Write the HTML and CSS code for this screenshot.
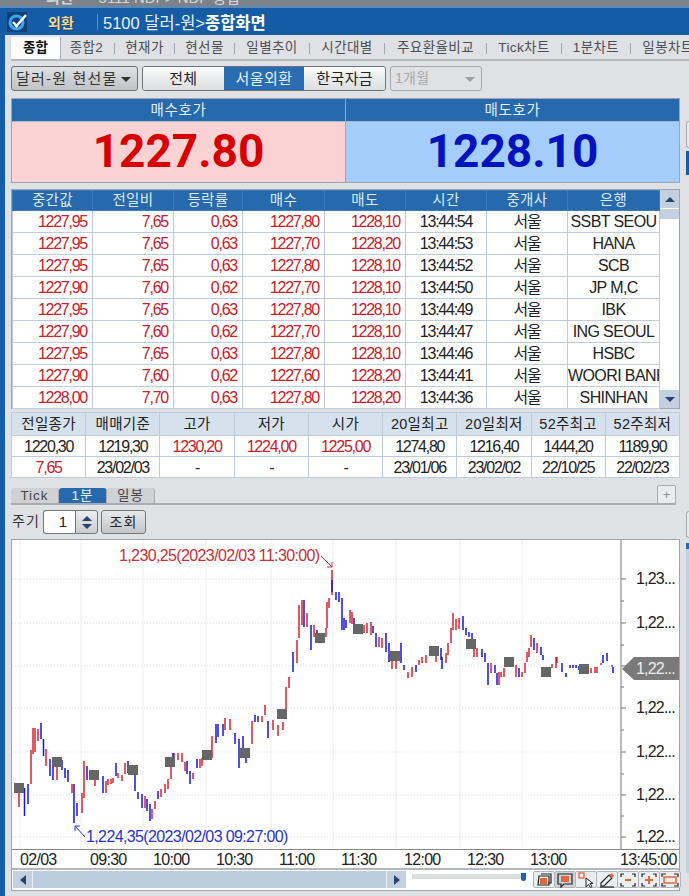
FILE: index.html
```html
<!DOCTYPE html>
<html lang="ko">
<head>
    <meta charset="UTF-8">
    <title>5100 달러-원 종합화면</title>
    <link rel="stylesheet" href="styles.css">
</head>
<body>
    <!-- window lying behind this one, only its bottom edge shows -->
    <div class="behind"><span class="behind-a">외환</span><span class="behind-b">5111 NDF&gt; NDF 종합</span></div>

    <div class="titlebar">
        <svg class="logo" width="20" height="20" viewBox="0 0 20 20">
            <rect width="20" height="20" fill="#123f78"/>
            <circle cx="9.5" cy="10.5" r="6.5" fill="none" stroke="#39a6ee" stroke-width="3"/>
            <path d="M6 10l3.5 4L19 3" fill="none" stroke="#fff" stroke-width="2.6"/>
        </svg>
        <span class="title-tag">외환</span>
        <span class="title-sep"></span>
        <span class="title-text">5100 달러-원&gt;<b>종합화면</b></span>
    </div>

    <div class="body-row">
        <div class="main">
            <div class="tabs">
                <span class="tab tab-on">종합</span>
                <span class="tab tab-a">종합2</span><i></i>
                <span class="tab tab-b">현재가</span><i></i>
                <span class="tab tab-b">현선물</span><i></i>
                <span class="tab tab-c">일별추이</span><i></i>
                <span class="tab tab-c">시간대별</span><i></i>
                <span class="tab tab-d">주요환율비교</span><i></i>
                <span class="tab tab-c">Tick차트</span><i></i>
                <span class="tab tab-e">1분차트</span><i></i>
                <span class="tab tab-c">일봉차트</span>
            </div>

            <div class="toolbar">
                <div class="select select-main">달러-원 현선물<span class="caret"></span></div>
                <div class="seg">
                    <span class="seg-btn">전체</span>
                    <span class="seg-btn seg-on">서울외환</span>
                    <span class="seg-btn">한국자금</span>
                </div>
                <div class="select select-off">1개월<span class="caret"></span></div>
            </div>

            <div class="quotes">
                <div class="quote">
                    <div class="quote-head">매수호가</div>
                    <div class="quote-val val-buy">1227.80</div>
                </div>
                <div class="quote quote-right">
                    <div class="quote-head">매도호가</div>
                    <div class="quote-val val-sell">1228.10</div>
                </div>
            </div>

            <div class="ticks">
                <table class="grid tick-table">
                    <colgroup>
                        <col class="w80"><col class="w81"><col class="w69"><col class="w82">
                        <col class="w81"><col class="w81"><col class="w81"><col class="w92">
                    </colgroup>
                    <thead>
                        <tr><th>중간값</th><th>전일비</th><th>등락률</th><th>매수</th><th>매도</th><th>시간</th><th>중개사</th><th>은행</th></tr>
                    </thead>
                    <tbody>
                        <tr><td>1227,95</td><td>7,65</td><td>0,63</td><td>1227,80</td><td>1228,10</td><td>13:44:54</td><td>서울</td><td>SSBT SEOU</td></tr>
                        <tr><td>1227,95</td><td>7,65</td><td>0,63</td><td>1227,70</td><td>1228,20</td><td>13:44:53</td><td>서울</td><td>HANA</td></tr>
                        <tr><td>1227,95</td><td>7,65</td><td>0,63</td><td>1227,80</td><td>1228,10</td><td>13:44:52</td><td>서울</td><td>SCB</td></tr>
                        <tr><td>1227,90</td><td>7,60</td><td>0,62</td><td>1227,70</td><td>1228,10</td><td>13:44:50</td><td>서울</td><td>JP M,C</td></tr>
                        <tr><td>1227,95</td><td>7,65</td><td>0,63</td><td>1227,80</td><td>1228,10</td><td>13:44:49</td><td>서울</td><td>IBK</td></tr>
                        <tr><td>1227,90</td><td>7,60</td><td>0,62</td><td>1227,70</td><td>1228,10</td><td>13:44:47</td><td>서울</td><td>ING SEOUL</td></tr>
                        <tr><td>1227,95</td><td>7,65</td><td>0,63</td><td>1227,80</td><td>1228,10</td><td>13:44:46</td><td>서울</td><td>HSBC</td></tr>
                        <tr><td>1227,90</td><td>7,60</td><td>0,62</td><td>1227,60</td><td>1228,20</td><td>13:44:41</td><td>서울</td><td>WOORI BANK</td></tr>
                        <tr><td>1228,00</td><td>7,70</td><td>0,63</td><td>1227,80</td><td>1228,20</td><td>13:44:36</td><td>서울</td><td>SHINHAN</td></tr>
                    </tbody>
                </table>
                <div class="vscroll">
                    <span class="vs-btn"><span class="arrow-up"></span></span>
                    <span class="vs-thumb"></span>
                    <span class="vs-track"></span>
                    <span class="vs-btn vs-down"><span class="arrow-down"></span></span>
                </div>
            </div>

            <table class="grid summary">
                <thead>
                    <tr><th>전일종가</th><th>매매기준</th><th>고가</th><th>저가</th><th>시가</th><th>20일최고</th><th>20일최저</th><th>52주최고</th><th>52주최저</th></tr>
                </thead>
                <tbody>
                    <tr><td>1220,30</td><td>1219,30</td><td class="red">1230,20</td><td class="red">1224,00</td><td class="red">1225,00</td><td>1274,80</td><td>1216,40</td><td>1444,20</td><td>1189,90</td></tr>
                    <tr><td class="red">7,65</td><td>23/02/03</td><td>-</td><td>-</td><td>-</td><td>23/01/06</td><td>23/02/02</td><td>22/10/25</td><td>22/02/23</td></tr>
                </tbody>
            </table>

            <div class="chart-tabs">
                <span class="ctab">Tick</span>
                <span class="ctab ctab-on">1분</span>
                <span class="ctab">일봉</span>
                <span class="plus">+</span>
            </div>

            <div class="period">
                <span class="period-label">주기</span>
                <span class="spin-input">1</span>
                <span class="spin"><span class="arrow-up"></span><span class="arrow-down"></span></span>
                <span class="query">조회</span>
            </div>

            <div class="chart">
                <svg class="chart-svg" width="667" height="309" viewBox="12 540 667 309">
                    <!-- grid -->
                    <path class="grid-v" d="M20 540V849M81 540V849M143 540V849M206 540V849M271 540V849M333 540V849M396 540V849M460 540V849M522 540V849"/>
                    <path class="grid-h" d="M12 579H621M12 623H621M12 666H621M12 708H621M12 752H621M12 795H621M12 837H621"/>

                    <!-- up bars -->
                    <path class="bar-up" d="M19 793V807M31 750V784M33 728V754M35 728V752M38 729V741M46 749V766M57 766V780M72 784V793M82 793V813M84 761V798M95 779V786M106 781V793M108 779V785M111 779V784M113 778V783M118 773V778M122 775V781M125 763V774M145 796V808M152 809V819M155 801V809M161 789V797M165 784V793M168 779V789M171 766V779M174 753V761M178 753V760M182 753V762M185 762V771M193 773V779M200 759V768M202 758V766M212 736V758M225 718V730M230 719V730M252 721V744M262 716V722M265 705V715M273 720V730M278 725V736M283 722V730M286 687V718M289 677V688M297 640V663M299 605V638M302 600V625M307 613V627M314 625V637M326 628V637M327 602V628M329 598V608M332 570V595M350 610V623M352 612V624M364 625V633M367 623V633M371 622V635M379 637V647M382 638V648M392 653V669M396 660V669M408 672V678M412 667V677M419 660V665M422 657V663M426 655V663M436 655V662M446 653V663M448 643V655M451 628V643M453 613V630M456 619V630M459 618V629M474 648V657M477 648V657M491 663V673M499 672V685M501 672V677M504 668V677M516 665V677M522 672V677M525 663V673M527 652V662M529 648V657M531 635V647M537 643V653M552 664V668M556 657V668M557 657V663M591 668V673M595 667V673M597 667V673M601 663V665M612 665V667"/>
                    <!-- down bars -->
                    <path class="bar-down" d="M24.5 788V816M28 784V804M41 723V739M43.5 739V756M50 759V776M53 766V780M62 760V770M65 768V778M68 770V782M74 784V823M77 803V816M87 766V780M90 770V780M103 776V793M116 763V776M128 761V773M135 773V791M138 792V799M142 794V808M147 799V811M150 804V821M158 791V799M173 753V760M187 761V774M190 771V784M197 759V768M216 724V743M218 724V737M223 724V736M235 733V744M239 739V768M243 736V749M246 758V763M255 715V722M258 716V722M268 721V738M293 652V672M304 600V627M311 625V650M317 630V636M332 580V592M336 592V600M339 592V602M342 598V630M344 618V630M346 620V628M354 618V625M373 626V633M376 633V647M386 633V652M389 643V662M401 643V663M404 665V670M416 665V672M441 648V660M442 657V669M463 616V630M466 628V635M469 632V637M472 633V640M482 649V657M485 653V662M488 663V685M495 665V673M497 673V685M519 668V677M534 638V650M541 647V655M543 655V660M562 663V672M566 673V677M570 665V668M573 665V668M576 665V668M579 666V670M603 655V663M607 653V661M613 667V673"/>

                    <!-- 30 min markers -->
                    <g class="marks">
                        <rect x="14" y="783" width="10" height="10"/><rect x="52" y="757" width="10" height="10"/>
                        <rect x="89" y="770" width="10" height="10"/><rect x="128" y="765" width="10" height="10"/>
                        <rect x="165" y="757" width="10" height="10"/><rect x="202" y="750" width="10" height="10"/>
                        <rect x="240" y="748" width="10" height="10"/><rect x="277" y="709" width="10" height="10"/>
                        <rect x="315" y="633" width="10" height="10"/><rect x="353" y="624" width="10" height="10"/>
                        <rect x="390" y="651" width="10" height="10"/><rect x="429" y="646" width="10" height="10"/>
                        <rect x="466" y="639" width="10" height="10"/><rect x="504" y="657" width="10" height="10"/>
                        <rect x="541" y="667" width="10" height="10"/><rect x="579" y="664" width="10" height="10"/>
                    </g>

                    <!-- high / low notes -->
                    <text class="note note-hi" x="119" y="561">1,230,25(2023/02/03 11:30:00)</text>
                    <path class="arrow-hi" d="M321 556L332 567M332 562V567H327"/>
                    <text class="note note-lo" x="86" y="842">1,224,35(2023/02/03 09:27:00)</text>
                    <path class="arrow-lo" d="M85 837L75 826M75 831V826H80"/>

                    <!-- price axis -->
                    <path class="axis" d="M621 540V849M621 579H626M621 601H624M621 623H626M621 645H624M621 666H626M621 687H624M621 708H626M621 730H624M621 752H626M621 774H624M621 795H626M621 816H624M621 837H626"/>
                    <g class="ylabels">
                        <text x="636" y="584">1,23...</text>
                        <text x="636" y="628">1,22...</text>
                        <text x="636" y="713">1,22...</text>
                        <text x="636" y="757">1,22...</text>
                        <text x="636" y="800">1,22...</text>
                        <text x="636" y="842">1,22...</text>
                    </g>
                    <path class="price-tag" d="M622 669L634 657H679V680H634Z"/>
                    <text class="tag-text" x="636" y="674">1,22...</text>
                </svg>

                <div class="xaxis">
                    <span class="xl x1">02/03</span><span class="xl x2">09:30</span><span class="xl x2">10:00</span>
                    <span class="xl x2">10:30</span><span class="xl x3">11:00</span><span class="xl x2">11:30</span>
                    <span class="xl x2">12:00</span><span class="xl x2">12:30</span><span class="xl x4">13:00</span>
                    <span class="xl xend">13:45:00</span>
                </div>

                <div class="hbar">
                    <span class="hs-btn"><span class="arrow-left"></span></span>
                    <span class="hs-track"></span>
                    <span class="hs-btn"><span class="arrow-right"></span></span>
                    <span class="zoom-track"><span class="zoom-thumb"></span></span>
                    <span class="tool">
                        <svg width="20" height="16" viewBox="0 0 20 16"><path class="ic" d="M7 2h10v9h-3"/><path class="ic" d="M5 4h10v9H4z"/><rect x="6" y="6" width="7" height="6" fill="#e0683a"/></svg>
                    </span>
                    <span class="tool tool-on">
                        <svg width="20" height="16" viewBox="0 0 20 16"><path class="ic" d="M3 2h14v10H9l-3 3v-3H3z"/><rect x="6" y="4" width="8" height="6" fill="#e0683a"/></svg>
                    </span>
                    <span class="tool">
                        <svg width="20" height="16" viewBox="0 0 20 16"><rect x="3" y="1" width="5" height="5" fill="none" stroke="#e0683a" stroke-width="1.3"/><path d="M10 6v9l2.500-2.500 2 3 1.500-1-2-3h3z" fill="#fff" stroke="#222"/></svg>
                    </span>
                    <span class="tool">
                        <svg width="20" height="16" viewBox="0 0 20 16"><path class="ic" d="M4 11l8-8 3 3-8 8H4z"/><path d="M12 3l3-2 2 3-2 2z" fill="#e0683a"/><path class="ic" d="M3 15h14"/></svg>
                    </span>
                    <span class="tool">
                        <svg width="20" height="16" viewBox="0 0 20 16"><path class="ic" d="M6 2H3v3M14 2h3v3M6 14H3v-3M14 14h3v-3"/><path d="M7 8h6" stroke="#e0683a" stroke-width="2"/></svg>
                    </span>
                    <span class="tool">
                        <svg width="20" height="16" viewBox="0 0 20 16"><path class="ic" d="M6 2H3v3M14 2h3v3M6 14H3v-3M14 14h3v-3"/><path d="M6 8h8M10 4v8" stroke="#e0683a" stroke-width="2"/></svg>
                    </span>
                    <span class="tool">
                        <svg width="20" height="16" viewBox="0 0 20 16"><path class="ic" d="M6 2H2v3M14 2h4v3M6 14H2v-3M14 14h4v-3"/><rect x="4" y="5" width="12" height="6" fill="none" stroke="#e0683a" stroke-width="1.500"/></svg>
                    </span>
                </div>
            </div>
        </div>

        <div class="rail">
            <span class="rail-btn"></span>
            <span class="rail-blue"></span>
            <span class="rail-btn rail-low"></span>
            <span class="rail-line"></span>
        </div>
    </div>
</body>
</html>
```

FILE: styles.css
```css
* {
    box-sizing: border-box;
}

html, body {
    height: 896px;
    overflow: hidden;
}

body {
    margin: 0;
    background: #dfe1e5;
    font-family: "Liberation Sans", "Noto Sans CJK KR", sans-serif;
    font-size: 14px;
    color: #222;
}

/* Window behind */
.behind {
    height: 7px;
    background: #7c8289;
    overflow: hidden;
    color: #d3d6da;
    font-size: 15px;
    line-height: 15px;
    display: flex;
}

.behind-a {
    margin: -10px 0 0 46px;
    font-weight: bold;
}

.behind-b {
    margin: -10px 0 0 25px;
}

/* Title */
.titlebar {
    height: 28px;
    background: #155ca6;
    border-top: 1px solid #3f8ed6;
    display: flex;
    align-items: center;
    color: #fff;
}

.logo {
    margin-left: 7px;
    flex: none;
}

.title-tag {
    margin-left: 21px;
    width: 28px;
    font-size: 14px;
    font-weight: bold;
    color: #f6dc8c;
    text-shadow: 1px 1px 0 #123f78;
}

.title-sep {
    margin-left: 21px;
    width: 1px;
    height: 16px;
    background: #5c8dc0;
}

.title-text {
    margin-left: 5px;
    font-size: 16.500px;
    color: #e8f0f8;
}

.title-text b {
    color: #fff;
}

.body-row {
    display: flex;
    height: 861px;
    border-left: 5px solid #155ca6;
}

.main {
    width: 676px;
    flex: none;
    padding-left: 6px;
    background: #dfe1e5;
}

/* Tab strip */
.tabs {
    width: 678px;
    height: 26px;
    padding-top: 2px;
    border-bottom: 2px solid #b4b7bc;
    display: flex;
    align-items: flex-start;
    white-space: nowrap;
    overflow: hidden;
    font-size: 13.500px;
    color: #4b4f55;
    letter-spacing: 0.4px;
}

.tabs i {
    flex: none;
    width: 1px;
    height: 11px;
    margin: 6px 10px 0;
    background: #a4a8ae;
}

.tab {
    flex: none;
    line-height: 22px;
    text-align: center;
}

.tab-on {
    width: 50px;
    height: 22px;
    margin-right: 8px;
    background: #fff;
    color: #111;
    font-weight: bold;
    border-right: 1px solid #aab0b6;
    letter-spacing: 0;
}

.tab-a { width: 35px; }
.tab-b { width: 39px; }
.tab-c { width: 54px; }
.tab-d { width: 81px; }
.tab-e { width: 48px; }

/* Toolbar */
.toolbar {
    margin-top: 5px;
    height: 25px;
    display: flex;
    gap: 4px;
}

.select {
    position: relative;
    width: 127px;
    padding-left: 4px;
    border: 1px solid #6d7278;
    border-radius: 3px;
    background: linear-gradient(#dfe1e4, #bfc2c6);
    font-size: 14px;
    line-height: 23px;
    color: #333;
    letter-spacing: 0.3px;
}

.select-main {
    font-size: 15px;
    letter-spacing: 1.2px;
}

.caret {
    position: absolute;
    right: 6px;
    top: 10px;
    border: 5px solid transparent;
    border-top: 5px solid #333;
    border-bottom: 0;
}

.select-off {
    width: 92px;
    border-color: #a6aaaf;
    background: #dfe1e5;
    color: #a4a7ab;
}

.select-off .caret {
    border-top-color: #9a9da1;
}

.seg {
    display: flex;
    width: 244px;
    border: 1px solid #6d7278;
    border-radius: 3px;
    overflow: hidden;
}

.seg-btn {
    flex: 1;
    text-align: center;
    font-size: 15px;
    line-height: 23px;
    background: linear-gradient(#fafafa, #dcdee0);
    color: #222;
    letter-spacing: 0.4px;
}

.seg-on {
    background: #2a6cb2;
    color: #e8f0f8;
}

/* Bid / ask */
.quotes {
    margin-top: 7px;
    width: 669px;
    height: 85px;
    display: flex;
    border: 1px solid #9ba6b2;
}

.quote {
    flex: 1;
}

.quote-right {
    border-left: 1px solid #9ba6b2;
}

.quote-head {
    height: 23px;
    background: #2669ad;
    border-bottom: 1px solid #a8b6c6;
    color: #e6eef6;
    font-size: 14.500px;
    line-height: 23px;
    text-align: center;
    letter-spacing: 0.6px;
}

.quote-val {
    height: 60px;
    font-family: Roboto, sans-serif;
    font-size: 46px;
    font-weight: bold;
    line-height: 58px;
    text-align: center;
}

.val-buy {
    background: #fad2d3;
    color: #d70000;
}

.val-sell {
    background: #a5cdfc;
    color: #0013bd;
}

/* Tables */
.ticks {
    margin-top: 6px;
    width: 669px;
    height: 220px;
    display: flex;
    border: 1px solid #9ba6b2;
    background: #fff;
}

.grid {
    border-collapse: collapse;
    table-layout: fixed;
    background: #fff;
    font-size: 16px;
    line-height: 19px;
    letter-spacing: -1.25px;
}

.tick-table {
    width: 647px;
    flex: none;
}

.w69 { width: 69px; }
.w80 { width: 80px; }
.w81 { width: 81px; }
.w82 { width: 82px; }
.w92 { width: 92px; }

.grid th, .grid td {
    padding: 0;
    border: 1px solid #bdcbdb;
    overflow: hidden;
    white-space: nowrap;
    font-weight: normal;
}

.grid th {
    font-size: 14.500px;
}

.tick-table th {
    height: 20px;
    background: #2669ad;
    border-color: #3b7cbd;
    color: #dfe9f4;
    letter-spacing: 0.4px;
}

.tick-table td {
    height: 22px;
    padding-bottom: 1px;
    text-align: center;
    color: #222;
}

.tick-table td:nth-child(-n+5) {
    text-align: right;
    padding-right: 5px;
    color: #c8202c;
}

.tick-table td:last-child {
    letter-spacing: -0.6px;
}

.vscroll {
    width: 20px;
    display: flex;
    flex-direction: column;
}

.vs-btn {
    height: 18px;
    background: #c3d0df;
    display: flex;
    align-items: center;
    justify-content: center;
}

.vs-thumb {
    height: 10px;
    margin-top: 1px;
    background: #c3d0df;
}

.vs-track {
    flex: 1;
    background: #fff;
}

.arrow-up {
    border: 5px solid transparent;
    border-bottom: 5px solid #26456b;
    border-top: 0;
}

.arrow-down {
    border: 5px solid transparent;
    border-top: 5px solid #26456b;
    border-bottom: 0;
}

.arrow-left {
    border: 5px solid transparent;
    border-right: 6px solid #26456b;
    border-left: 0;
}

.arrow-right {
    border: 5px solid transparent;
    border-left: 6px solid #26456b;
    border-right: 0;
}

.summary {
    margin-top: 3px;
    width: 669px;
    border: 1px solid #9ba6b2;
    text-align: center;
}

.summary th {
    height: 23px;
    background: #d5e1ed;
    color: #222;
    letter-spacing: 0.3px;
}

.summary td {
    height: 21px;
}

.red {
    color: #c8202c;
}

/* Chart tabs */
.chart-tabs {
    position: relative;
    margin-top: 10px;
    width: 665px;
    height: 17px;
    border-bottom: 2px solid #a8acb2;
    display: flex;
}

.ctab {
    width: 48px;
    height: 15px;
    background: #cfd1d4;
    border-right: 1px solid #a8acb2;
    text-align: center;
    font-size: 13.500px;
    line-height: 15px;
    color: #444;
    letter-spacing: 1px;
    border-radius: 3px 3px 0 0;
}

.ctab-on {
    background: #2669ad;
    color: #e8f0f8;
}

.plus {
    position: absolute;
    right: 0;
    top: -3px;
    width: 19px;
    height: 19px;
    border: 1px solid #a8acb2;
    border-radius: 2px;
    background: #e9ebee;
    color: #8c9096;
    text-align: center;
    font-size: 13px;
    line-height: 17px;
}

/* Period */
.period {
    margin-top: 5px;
    height: 24px;
    display: flex;
    align-items: stretch;
}

.period-label {
    width: 32px;
    padding-left: 1px;
    font-size: 14px;
    line-height: 22px;
    color: #333;
    letter-spacing: 1px;
}

.spin-input {
    width: 32px;
    padding-right: 8px;
    background: #fff;
    border: 1px solid #777;
    border-right: 0;
    border-radius: 3px 0 0 3px;
    text-align: right;
    font-size: 15px;
    line-height: 22px;
}

.spin {
    width: 23px;
    border: 1px solid #777;
    border-radius: 0 3px 3px 0;
    background: linear-gradient(#eceef0, #c9ccd0);
    display: flex;
    flex-direction: column;
    align-items: center;
    justify-content: center;
    gap: 3px;
}

.query {
    margin-left: 3px;
    width: 45px;
    border: 1px solid #777;
    border-radius: 3px;
    background: linear-gradient(#e6e8ea, #c3c6ca);
    text-align: center;
    font-size: 14px;
    line-height: 22px;
    letter-spacing: 1px;
}

/* Chart */
.chart {
    margin-top: 5px;
    width: 669px;
    height: 352px;
    border: 1px solid #9ba6b2;
    background: #fff;
    display: flex;
    flex-direction: column;
}

.chart-svg {
    display: block;
    flex: none;
}

.grid-v {
    stroke: #eeeeee;
    stroke-width: 1;
    fill: none;
}

.grid-h {
    stroke: #dddddd;
    stroke-width: 1;
    stroke-dasharray: 1 2;
    fill: none;
}

.bar-up {
    stroke: #d62433;
    stroke-width: 1.500;
    fill: none;
}

.bar-down {
    stroke: #1616d8;
    stroke-width: 1.500;
    fill: none;
}

.marks {
    fill: #666666;
}

.note {
    font-size: 16px;
    letter-spacing: -0.62px;
}

.note-hi {
    fill: #c8303a;
}

.note-lo {
    fill: #2a35c8;
}

.arrow-hi {
    stroke: #c8303a;
    fill: none;
}

.arrow-lo {
    stroke: #2a35c8;
    fill: none;
}

.axis {
    stroke: #777;
    fill: none;
}

.ylabels text, .tag-text {
    font-size: 16px;
    letter-spacing: -0.8px;
    fill: #222;
}

.price-tag {
    fill: #7a7a7a;
}

.tag-text {
    fill: #eee;
}

.xaxis {
    height: 21px;
    flex: none;
    border-top: 1px solid #888;
    border-bottom: 2px solid #b4b7bc;
    display: flex;
    font-size: 16px;
    line-height: 19px;
    letter-spacing: -0.7px;
    white-space: nowrap;
}

.xl {
    flex: none;
    color: #222;
}

.x1 { width: 70px; margin-left: 8px; }
.x2 { width: 63px; }
.x3 { width: 62px; }
.x4 { width: 63px; }

.xend {
    margin-left: 27px;
}

.hbar {
    flex: 1;
    display: flex;
    align-items: center;
    padding: 0 0 1px 1px;
}

.hs-btn {
    width: 19px;
    height: 17px;
    flex: none;
    background: #c3d0df;
    display: flex;
    align-items: center;
    justify-content: center;
}

.hs-track {
    width: 355px;
    height: 17px;
    flex: none;
    background: #bdcde0;
    border-left: 1px solid #e9eef4;
    border-right: 1px solid #e9eef4;
}

.zoom-track {
    position: relative;
    width: 113px;
    height: 5px;
    margin: -6px 8px 0 6px;
    flex: none;
    background: #d9dfdc;
}

.zoom-thumb {
    position: absolute;
    right: -1px;
    top: -1px;
    width: 5px;
    height: 8px;
    background: #1d62b5;
    border-radius: 0 0 3px 3px;
}

.tool {
    width: 22px;
    height: 17px;
    flex: none;
    margin-right: -1px;
    border: 1px solid #b0b3b8;
    border-radius: 2px;
    background: #eceef0;
    display: flex;
    align-items: center;
    justify-content: center;
}

.tool-on {
    background: #cfd2d6;
}

.ic {
    fill: none;
    stroke: #222;
    stroke-width: 1.200;
}

/* Edge of the neighbouring window */
.rail {
    flex: 1;
    margin-left: 5px;
    display: flex;
    flex-direction: column;
    align-items: stretch;
}

.rail-btn {
    height: 27px;
    margin-top: 86px;
    border: 1px solid #a8acb2;
    border-right: 0;
    border-radius: 3px 0 0 3px;
    background: #e9ebee;
}

.rail-blue {
    height: 24px;
    margin-top: 3px;
    background: #155ca6;
}

.rail-low {
    margin-top: 336px;
}

.rail-line {
    height: 330px;
    margin-top: 5px;
    background: #c3d0df;
    border-top: 6px solid #2669ad;
}
```
